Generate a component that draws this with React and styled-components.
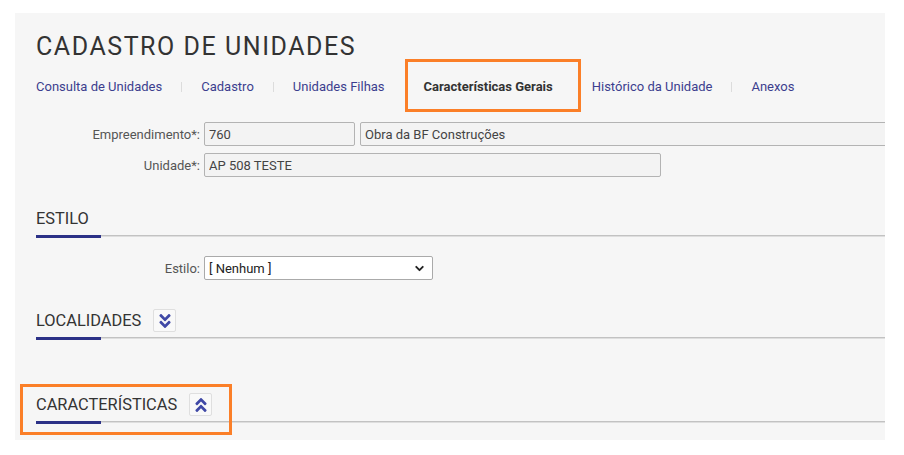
import styled, { createGlobalStyle } from 'styled-components'
import { FaAngleDoubleDown, FaAngleDoubleUp } from 'react-icons/fa'
import { ChevronDown } from 'lucide-react'

const GlobalStyle = createGlobalStyle`
  body {
    margin: 0;
    background: #fff;
    font-family: Roboto, "Liberation Sans", sans-serif;
  }
`

const Panel = styled.main`
  box-sizing: border-box;
  margin: 13px 0 0 15px;
  width: 870px;
  height: 427px;
  padding: 20px 0 0 21px;
  background: #f6f6f6;
  overflow: hidden;
`

const Title = styled.h1`
  margin: 0;
  font-size: 25px;
  font-weight: 400;
  line-height: 28px;
  color: #333;
  letter-spacing: 1.55px;
`

const TabBar = styled.ul`
  display: flex;
  margin: 18px 0 0;
  padding: 0;
  list-style: none;
`

const Tab = styled.li`
  position: relative;
  padding: 0 19px 0 20px;
  font-size: 13px;
  line-height: 16px;
  color: ${(p) => (p.$active ? '#333' : '#3c3e8e')};
  font-weight: ${(p) => (p.$active ? 700 : 400)};
  white-space: nowrap;

  &:first-child {
    padding-left: 0;
  }

  & + &::before {
    content: '';
    position: absolute;
    left: 0;
    top: 3px;
    width: 1px;
    height: 10px;
    background: #dcdcdc;
  }
`

const Highlight = styled.span`
  position: absolute;
  box-sizing: border-box;
  border: 3px solid #fb7f28;
  pointer-events: none;
  z-index: 2;
`

const Form = styled.div`
  display: flex;
  flex-direction: column;
  gap: 7px;
  margin-top: 27px;
`

const FieldRow = styled.div`
  display: flex;
  align-items: center;
  gap: 4px;
`

const Label = styled.label`
  width: 164px;
  text-align: right;
  font-size: 13px;
  color: #555;
  flex-shrink: 0;
`

const Input = styled.input`
  box-sizing: border-box;
  flex-shrink: 0;
  width: ${(p) => p.$width}px;
  height: 24px;
  margin-right: ${(p) => p.$after || 0}px;
  padding: 0 4px;
  border: 1px solid #b3b3b3;
  border-radius: 2px;
  background: #f3f3f3;
  font-family: Roboto, "Liberation Sans", sans-serif;
  font-size: 13px;
  color: #444;
`

const SelectBox = styled.div`
  box-sizing: border-box;
  display: flex;
  align-items: center;
  justify-content: space-between;
  width: 229px;
  height: 24px;
  padding: 0 6px 0 4px;
  border: 1px solid #aaa;
  border-radius: 2px;
  background: #fff;
  font-size: 13px;
  color: #222;
`

const Section = styled.section`
  margin-top: ${(p) => p.$top}px;
`

const SectionHeader = styled.div`
  position: relative;
  display: flex;
  align-items: center;
  gap: 12px;
  min-height: 23px;
  padding-bottom: 5px;
  border-bottom: 1px solid #c2c2c2;
  box-shadow: 0 1px 0 #dedede;

  &::after {
    content: '';
    position: absolute;
    left: 0;
    bottom: -3px;
    width: 65px;
    height: 3px;
    background: #2c3187;
  }
`

const SectionTitle = styled.h2`
  margin: 0;
  font-size: 16.4px;
  font-weight: 400;
  color: #333;
`

const ToggleButton = styled.button`
  box-sizing: border-box;
  display: flex;
  align-items: center;
  justify-content: center;
  width: 23px;
  height: 23px;
  padding: 0;
  border: 1px solid #dfdfdf;
  border-radius: 2px;
  background: #f9f9f9;
  color: #3f48a6;
  cursor: pointer;
`

const SectionBody = styled.div`
  padding-top: 20px;
`

const tabs = [
  'Consulta de Unidades',
  'Cadastro',
  'Unidades Filhas',
  'Características Gerais',
  'Histórico da Unidade',
  'Anexos',
]

export default function App() {
  return (
    <>
      <GlobalStyle />
      <Panel>
        <Title>CADASTRO DE UNIDADES</Title>
        <TabBar>
          {tabs.map((t) => (
            <Tab key={t} $active={t === 'Características Gerais'}>
              {t}
              {t === 'Características Gerais' && (
                <Highlight
                  style={{ left: 1, right: -9, top: -20, bottom: -17 }}
                />
              )}
            </Tab>
          ))}
        </TabBar>

        <Form>
          <FieldRow>
            <Label>Empreendimento*:</Label>
            <Input $width={151} $after={1} value="760" readOnly disabled />
            <Input $width={540} value="Obra da BF Construções" readOnly disabled />
          </FieldRow>
          <FieldRow>
            <Label>Unidade*:</Label>
            <Input $width={457} value="AP 508 TESTE" readOnly disabled />
          </FieldRow>
        </Form>

        <Section $top={30}>
          <SectionHeader>
            <SectionTitle>ESTILO</SectionTitle>
          </SectionHeader>
          <SectionBody>
            <FieldRow>
              <Label>Estilo:</Label>
              <SelectBox>
                <span>[ Nenhum ]</span>
                <ChevronDown size={13} strokeWidth={3.5} color="#222" />
              </SelectBox>
            </FieldRow>
          </SectionBody>
        </Section>

        <Section $top={29}>
          <SectionHeader>
            <SectionTitle>LOCALIDADES</SectionTitle>
            <ToggleButton aria-label="expandir">
              <FaAngleDoubleDown size={18} />
            </ToggleButton>
          </SectionHeader>
        </Section>

        <Section $top={55}>
          <SectionHeader>
            <SectionTitle>CARACTERÍSTICAS</SectionTitle>
            <ToggleButton aria-label="recolher">
              <FaAngleDoubleUp size={18} />
            </ToggleButton>
            <Highlight
              style={{ left: -16, top: -9, width: 212, height: 51 }}
            />
          </SectionHeader>
        </Section>
      </Panel>
    </>
  )
}
